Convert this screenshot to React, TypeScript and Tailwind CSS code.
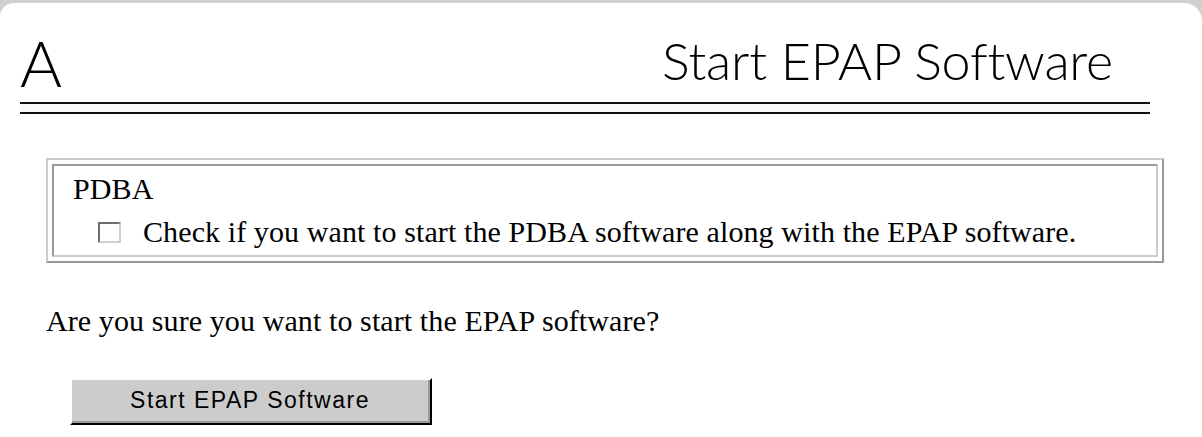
import React from "react";

export default function App() {
  return (
    <div className="w-[1202px] h-[437px] overflow-hidden bg-[#d0d0d0] pt-[3px]">
      <div className="h-full bg-white rounded-tl-[14px] rounded-tr-[18px]">
        <div className="pl-[20px] pr-[52px]">
          <div className="flex justify-between items-start h-[99px]">
            <div className="mt-[28px] text-[64px] leading-none font-light text-black [font-family:Lato,'Open_Sans',sans-serif]">
              A
            </div>
            <div className="mt-[31px] mr-[37px] text-[52px] tracking-[-0.2px] leading-none font-light text-black [font-family:Lato,'Open_Sans',sans-serif]">
              Start EPAP Software
            </div>
          </div>
          <div className="h-[12px] border-t-2 border-b-2 border-[#111] bg-[#f8f8f8]" />
        </div>

        <div className="pl-[46px] pr-[38px] [font-family:'Liberation_Serif','Times_New_Roman',serif] text-black">
          <div className="mt-[44px] border-2 border-t-[#cccccc] border-l-[#cccccc] border-b-[#999999] border-r-[#999999] p-[4px]">
            <div className="border-2 border-t-[#999999] border-l-[#999999] border-b-[#cccccc] border-r-[#cccccc] pt-[6px] pb-[6px] pl-[19px]">
              <div className="text-[30px] leading-[34px] tracking-[0.1px]">PDBA</div>
              <div className="mt-[9px] flex items-center pl-[25px] text-[30px] leading-[34px] tracking-[0.1px]">
                <span className="w-[23px] h-[21px] border-2 border-t-[#6e6e6e] border-l-[#6e6e6e] border-b-[#d0d0d0] border-r-[#d0d0d0] bg-white shrink-0" />
                <span className="ml-[22px]">
                  Check if you want to start the PDBA software along with the EPAP software.
                </span>
              </div>
            </div>
          </div>

          <div className="mt-[41px] text-[30px] leading-[34px] tracking-[0.1px]">
            Are you sure you want to start the EPAP software?
          </div>

          <div className="mt-[40px] pl-[24px]">
            <button
              type="button"
              className="w-[362px] h-[47px] border-2 border-t-white border-l-white border-b-black border-r-black p-0 block"
            >
              <div className="h-full w-full border-b-2 border-r-2 border-[#999999] bg-[#cccccc] flex items-center justify-center text-[23px] tracking-[1.5px] text-black [font-family:'Liberation_Sans',Arial,sans-serif]">
                Start EPAP Software
              </div>
            </button>
          </div>
        </div>
      </div>
    </div>
  );
}
